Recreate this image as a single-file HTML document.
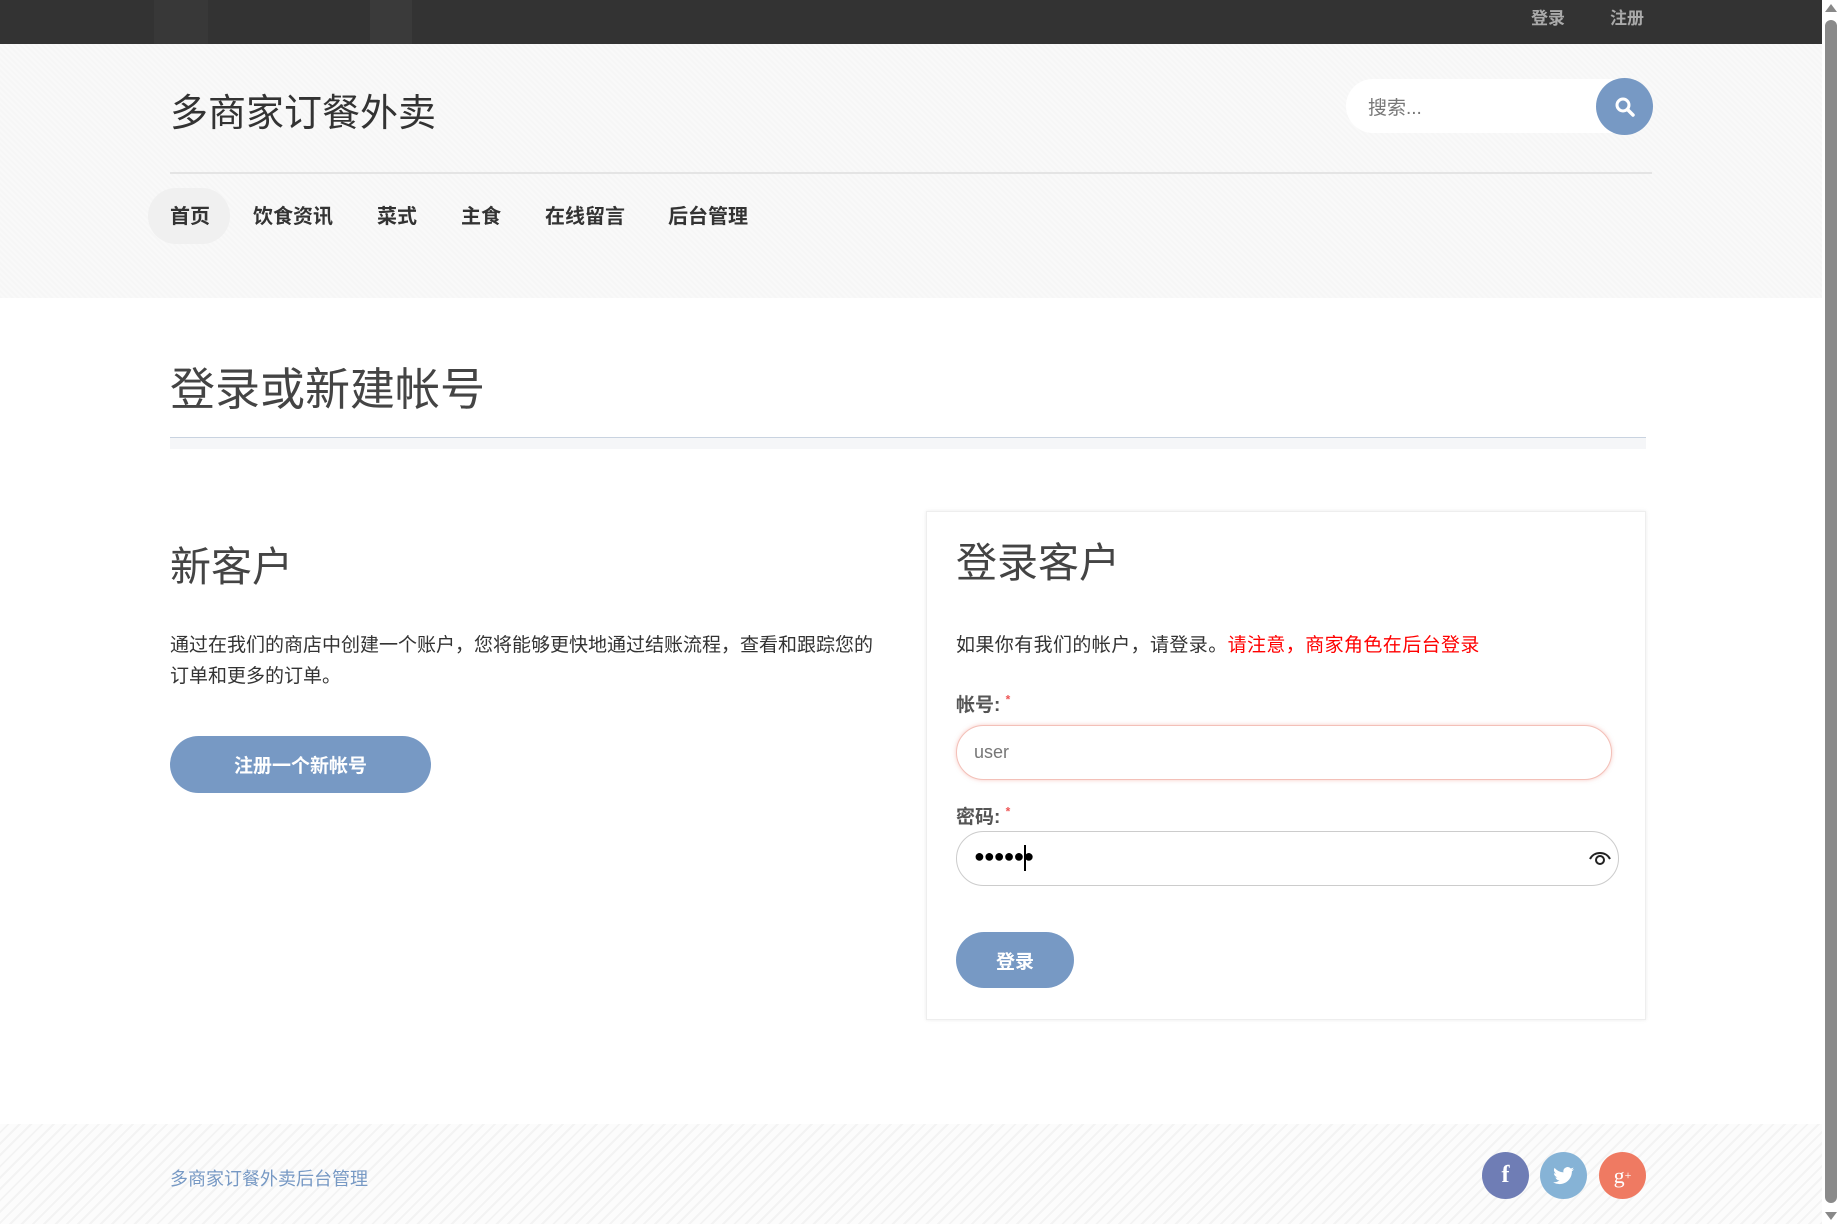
<!DOCTYPE html>
<html><head><meta charset="utf-8"><style>
*{margin:0;padding:0;box-sizing:border-box}
body{width:1840px;height:1224px;overflow:hidden;background:#fff;font-family:"Liberation Sans","Noto Sans CJK SC",sans-serif;color:#333;position:relative}
.abs{position:absolute}
.top{left:0;top:0;width:1822px;height:44px;background:#333}
.top span{position:absolute;top:4px;font-size:17px;font-weight:bold;color:#aaa}
.hdr{left:0;top:44px;width:1822px;height:254px;background-color:#f9f9f9;background-image:repeating-linear-gradient(45deg,rgba(0,0,0,.01) 0 2px,transparent 2px 4px)}
.nav span{position:absolute;top:200px;font-size:20px;font-weight:bold;color:#333}
.btn{background:#7799c4;color:#fff;font-weight:bold;font-size:19px;display:flex;align-items:center;justify-content:center;border-radius:30px}
.circ{border-radius:50%;display:flex;align-items:center;justify-content:center;color:#fff}
</style></head><body>
<div class="abs top">
<div class="abs" style="left:154px;top:0;width:54px;height:44px;background:#383838"></div>
<div class="abs" style="left:370px;top:0;width:42px;height:44px;background:#3a3a3a"></div>
<span style="left:1531px">登录</span><span style="left:1610px">注册</span>
</div>
<div class="abs hdr"></div>
<div class="abs" style="left:170px;top:82px;font-size:38px;color:#333">多商家订餐外卖</div>
<div class="abs" style="left:1346px;top:79px;width:300px;height:54px;background:#fff;border-radius:27px"></div>
<div class="abs" style="left:1368px;top:93px;font-size:19px;color:#777">搜索...</div>
<div class="abs circ" style="left:1596px;top:78px;width:57px;height:57px;background:#7799c4">
<svg width="24" height="24" viewBox="0 0 24 24"><circle cx="10" cy="10" r="6" fill="none" stroke="#fff" stroke-width="3"/><path d="M14.5 14.5L20 20" stroke="#fff" stroke-width="3.5" stroke-linecap="round"/></svg></div>
<div class="abs" style="left:170px;top:172px;width:1482px;height:2px;background:#e4e4e4"></div>
<div class="abs" style="left:148px;top:188px;width:82px;height:56px;border-radius:28px;background:#f0f0f0"></div>
<div class="nav"><span style="left:170px">首页</span><span style="left:253px">饮食资讯</span><span style="left:377px">菜式</span><span style="left:461px">主食</span><span style="left:545px">在线留言</span><span style="left:668px">后台管理</span></div>
<div class="abs" style="left:170px;top:353px;font-size:45px;color:#444">登录或新建帐号</div>
<div class="abs" style="left:170px;top:437px;width:1476px;height:12px;background:#f5f6f8;border-top:1px solid #c9d3e0"></div>
<div class="abs" style="left:170px;top:533px;font-size:41px;color:#444">新客户</div>
<div class="abs" style="left:170px;top:630px;width:703px;font-size:19px;line-height:31px;color:#333">通过在我们的商店中创建一个账户，您将能够更快地通过结账流程，查看和跟踪您的订单和更多的订单。</div>
<div class="abs btn" style="left:170px;top:736px;width:261px;height:57px">注册一个新帐号</div>
<div class="abs" style="left:926px;top:511px;width:720px;height:509px;border:1px solid #eee;box-shadow:0 0 4px rgba(0,0,0,.08);background:#fff"></div>
<div class="abs" style="left:956px;top:529px;font-size:41px;color:#444">登录客户</div>
<div class="abs" style="left:956px;top:630px;font-size:19px;color:#333;letter-spacing:0.4px">如果你有我们的帐户，请登录。<span style="color:#f00">请注意，商家角色在后台登录</span></div>
<div class="abs" style="left:956px;top:690px;font-size:19px;font-weight:bold;color:#555">帐号: <sup style="color:#e55;font-size:12px">*</sup></div>
<div class="abs" style="left:956px;top:725px;width:656px;height:55px;border:1px solid #f3c0b8;border-radius:28px;box-shadow:0 0 4px rgba(240,150,140,.5);background:#fff"></div>
<div class="abs" style="left:974px;top:742px;font-size:18px;color:#777">user</div>
<div class="abs" style="left:956px;top:802px;font-size:19px;font-weight:bold;color:#555">密码: <sup style="color:#e55;font-size:12px">*</sup></div>
<div class="abs" style="left:956px;top:831px;width:663px;height:55px;border:1px solid #ccc;border-radius:28px;background:#fff"></div>
<div class="abs" style="left:974px;top:846px;font-size:18px;color:#000;letter-spacing:-1px">●●●●●●</div>
<div class="abs" style="left:1024px;top:845px;width:2px;height:26px;background:#000"></div>
<svg class="abs" style="left:1588px;top:848px" width="24" height="20" viewBox="0 0 24 20"><path d="M2 11C6 3 18 3 22 11" fill="none" stroke="#222" stroke-width="2"/><circle cx="12" cy="12" r="4" fill="none" stroke="#222" stroke-width="2"/></svg>
<div class="abs btn" style="left:956px;top:932px;width:118px;height:56px">登录</div>
<div class="abs" style="left:0;top:1124px;width:1822px;height:100px;background-color:#fcfcfc;background-image:repeating-linear-gradient(-45deg,#f3f3f3 0 2px,transparent 2px 8px)"></div>
<div class="abs" style="left:170px;top:1165px;font-size:18px;color:#7799c4">多商家订餐外卖后台管理</div>
<div class="abs circ" style="left:1482px;top:1152px;width:47px;height:47px;background:#6f7db5;font-weight:bold;font-size:24px;font-family:'Liberation Serif',serif">f</div>
<div class="abs circ" style="left:1540px;top:1152px;width:47px;height:47px;background:#86b3d6">
<svg width="22" height="20" viewBox="0 0 24 20"><path d="M23 2.5a9 9 0 0 1-2.7.8A4.7 4.7 0 0 0 22.4.7a9.4 9.4 0 0 1-3 1.1A4.7 4.7 0 0 0 11.4 6 13.3 13.3 0 0 1 1.7 1.1a4.7 4.7 0 0 0 1.5 6.3A4.6 4.6 0 0 1 1 6.8a4.7 4.7 0 0 0 3.8 4.6 4.7 4.7 0 0 1-2.1.1 4.7 4.7 0 0 0 4.4 3.3A9.4 9.4 0 0 1 0 16.7 13.3 13.3 0 0 0 7.2 18.8c8.6 0 13.4-7.2 13.4-13.4v-.6A9.5 9.5 0 0 0 23 2.5z" fill="#fff"/></svg></div>
<div class="abs circ" style="left:1599px;top:1152px;width:47px;height:47px;background:#ef7a62;font-size:22px;font-family:'Liberation Serif',serif">g<sup style="font-size:12px">+</sup></div>
<div class="abs" style="left:1822px;top:0;width:18px;height:1224px;background:#fff"></div>
<div class="abs" style="left:1825px;top:20px;width:12px;height:1183px;background:#8a8a8a;border-radius:6px"></div>
<div class="abs" style="left:1825px;top:4px;width:0;height:0;border-left:6px solid transparent;border-right:6px solid transparent;border-bottom:8px solid #888"></div>
<div class="abs" style="left:1825px;top:1212px;width:0;height:0;border-left:6px solid transparent;border-right:6px solid transparent;border-top:8px solid #888"></div>
</body></html>
